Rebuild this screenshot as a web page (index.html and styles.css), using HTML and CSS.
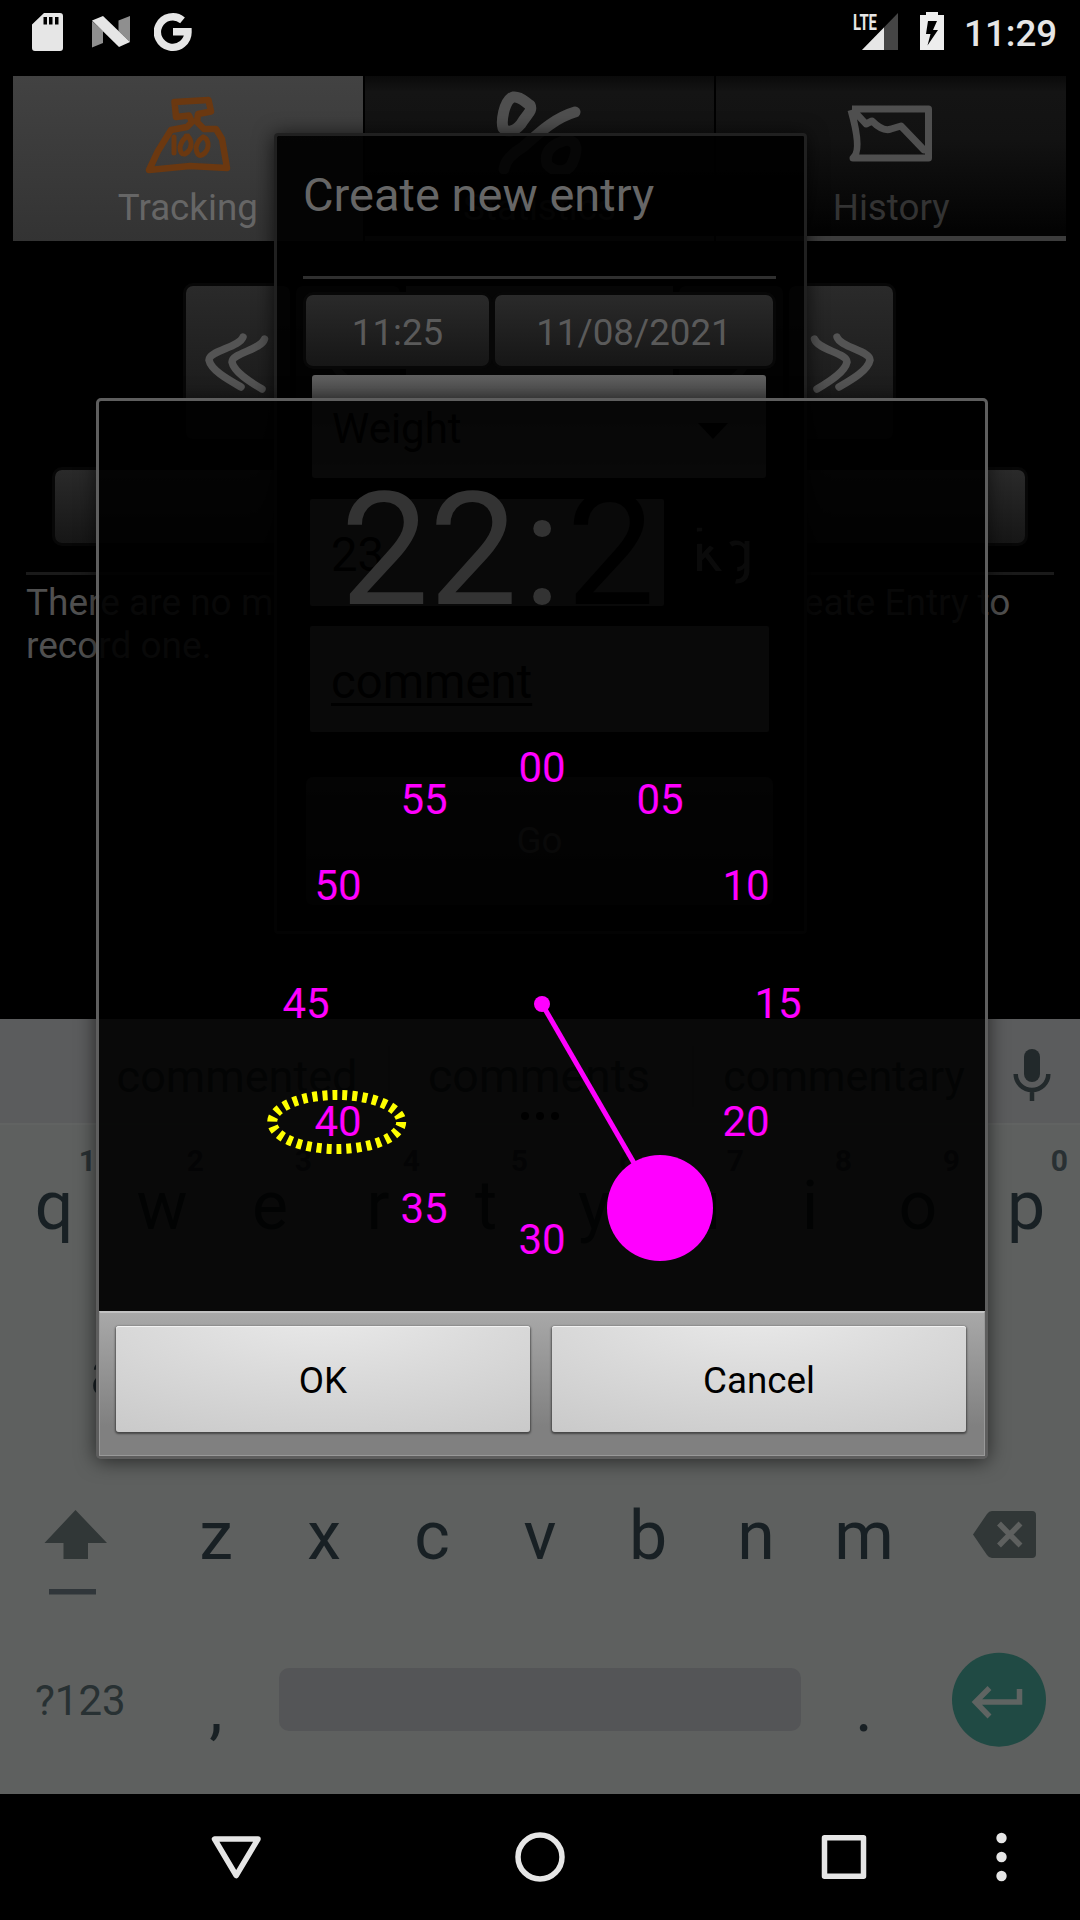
FILE: index.html
```html
<!DOCTYPE html>
<html lang="en">
<head>
<meta charset="utf-8">
<title>Create new entry</title>
<link rel="stylesheet" href="styles.css">
</head>
<body>
<div class="screen">
  <header class="status">
    <div class="status-left">
      <svg class="ic-sd" width="32" height="40" viewBox="0 0 32 40"><path fill="#e6e6e6" fill-rule="evenodd" d="M12 1H28q3 0 3 3V36q0 3-3 3H3q-3 0-3-3V12.500zM11.500 5v7.500h3.500V5zM17 5v7.500h3.500V5zM23 5v7.500h3.500V5z"/></svg>
      <svg class="ic-n" width="40" height="34" viewBox="0 0 40 34"><path fill="#8f8f8f" d="M1 6 12 16V28L1 32.500zM27.500 5.500 39 1V27L27.500 16z"/><path fill="#e6e6e6" d="M1 5.500 12 1 39 27 28 32z"/></svg>
      <svg class="ic-g" width="38" height="40" viewBox="0 0 38 40"><path fill="none" stroke="#e6e6e6" stroke-width="7.400" d="M28.500 8.300A15.300 15.300 0 1 0 34 19.700H19"/></svg>
    </div>
    <div class="status-right">
      <svg class="ic-lte" width="48" height="40" viewBox="0 0 48 40"><path fill="#454545" d="M46 1V38H10z"/><path fill="#e6e6e6" d="M32 15.500V38H10z"/><path fill="#000" d="M0 0H26V20H0z"/><text x="1" y="17.500" textLength="24" lengthAdjust="spacingAndGlyphs" class="lte">LTE</text></svg>
      <svg class="ic-bat" width="24" height="38" viewBox="0 0 24 38"><path fill="#ededed" fill-rule="evenodd" d="M6 0H18V3H24V38H0V3H6zM8 9 6 22H10.500L7.500 33.500 18 18H13L17 9z"/></svg>
      <span class="clock">11:29</span>
    </div>
  </header>

  <main class="app">
    <nav class="tabs">
      <div class="tab active">
        <svg class="tab-icon" width="88" height="88" viewBox="144 86 88 88" fill="none" stroke="#6b3810" stroke-width="6.500" stroke-linejoin="round" stroke-linecap="round">
          <path d="M174.500 102 208.500 100 211 111.500 198 114 197 122 204 129 216 129 222 139 227 168 190 166 149 170 158 151 171 130 187 127 192 122 189 115.500 176 117z"/>
          <path stroke-width="5" d="M174 137V153M188 136q-6 3-8 11 0 8 5 7 7-4 6-12-1-5-5-6M203 137q-6 4-7 11 1 9 6 7 7-4 6-12-1-5-5-6"/>
        </svg>
        <span class="tab-label">Tracking</span>
      </div>
      <div class="tab">
        <svg class="tab-icon" width="88" height="88" viewBox="495 86 88 88" fill="none" stroke="#4f4f4f" stroke-width="11" stroke-linecap="round" stroke-linejoin="round">
          <path d="M510 98C503 103 500 121 502 128 507 134 514 131 520 124 526 114 532 111 529 105 524 103 521 96 512 97M574 112C550 119 532 139 522 147 512 153 504 161 503 169M566 140C550 144 543 152 546 164 552 172 565 174 571 164 577 150 577 142 566 140"/>
        </svg>
        <span class="tab-label">Statistics</span>
      </div>
      <div class="tab">
        <svg class="tab-icon" width="88" height="88" viewBox="848 86 88 88" fill="none" stroke="#4f4f4f" stroke-width="7" stroke-linejoin="round">
          <path d="M853 109H929.500V158H854C862 152 857 128 852 110M855 111 867 124 873 121Q884 132 892 129L902 126 925 150H929"/>
        </svg>
        <span class="tab-label">History</span>
      </div>
    </nav>
    <div class="pager">
      <div class="btn"><svg width="104" height="153" viewBox="186 286 104 153" class="chev"><path d="M243 337C240 347 209 351 209 360 211 370 227 379 241 387M264.500 339C261 350 232 353 232 362 234 372 250 382 262 389"/></svg></div>
      <div class="btn"><svg width="104" height="153" viewBox="296 286 104 153" class="chev"><path d="M365 339C361 350 333 353 333 362 335 372 350 382 362 389"/></svg></div>
      <div class="period"></div>
      <div class="btn"><svg width="104" height="153" viewBox="680 286 104 153" class="chev"><path d="M715 339C719 350 747 353 747 362 745 372 730 382 718 389"/></svg></div>
      <div class="btn"><svg width="104" height="153" viewBox="790 286 104 153" class="chev"><path d="M838 337C841 347 871 351 871 360 869 370 854 379 840 387M815.500 339C819 350 848 353 848 362 846 372 830 382 818 389"/></svg></div>
    </div>
    <div class="btn wide"></div>
    <hr class="rule">
    <p class="empty">There are no measurements yet. Use Menu &gt; Create Entry to<br>record one.</p>
  </main>

  <section class="keyboard">
    <div class="suggest">
      <span>commented</span><span class="mid">comments<i class="more"></i></span><span class="last">commentary</span>
      <svg class="mic" width="38" height="52" viewBox="0 0 38 52"><rect x="11" y="0" width="16" height="33" rx="8" fill="#22292b"/><path fill="none" stroke="#22292b" stroke-width="4.500" d="M2.700 25a16.300 16 0 0 0 32.600 0M19 41V52"/></svg>
    </div>
    <div class="keys first">
      <b>q<sup>1</sup></b><b>w<sup>2</sup></b><b>e<sup>3</sup></b><b>r<sup>4</sup></b><b>t<sup>5</sup></b><b>y<sup>6</sup></b><b>u<sup>7</sup></b><b>i<sup>8</sup></b><b>o<sup>9</sup></b><b>p<sup>0</sup></b>
    </div>
    <div class="keys second"><b>a</b><b>s</b><b>d</b><b>f</b><b>g</b><b>h</b><b>j</b><b>k</b><b>l</b></div>
    <div class="keys third">
      <svg width="162" height="162" viewBox="0 1454 162 162"><path fill="#313737" d="M75.500 1510 107 1543H88V1559H63.500V1543H44.500z"/><path fill="#30363a" d="M49 1589H96V1594.500H49z"/></svg>
      <b>z</b><b>x</b><b>c</b><b>v</b><b>b</b><b>n</b><b>m</b>
      <svg width="162" height="162" viewBox="918 1454 162 162"><path fill="#313737" d="M992 1511H1032q4 0 4 4V1554q0 4-4 4H992q-3 0-5-3L973 1534.500 987 1514q2-3 5-3z"/><path fill="none" stroke="#5e605f" stroke-width="5.500" d="M999 1523.500 1020.500 1545.500M1020.500 1523.500 999 1545.500"/></svg>
    </div>
    <div class="keys fourth">
      <span class="sym">?123</span><b>,</b><span class="space"></span><b>.</b>
      <svg class="enter" width="96" height="96" viewBox="951 1652 96 96"><circle cx="999" cy="1699.700" r="47" fill="#204a44"/><path fill="none" stroke="#5f6462" stroke-width="5.500" d="M1019.500 1689V1702H976M989.500 1688 975.500 1702 989.500 1716.500"/></svg>
    </div>
  </section>

  <footer class="navbar">
    <svg width="1080" height="126" viewBox="0 1794 1080 126" fill="none" stroke="#e6e6e6" stroke-linejoin="round">
      <path stroke-width="5.500" d="M214.500 1839H258L236.200 1875.500z"/>
      <circle cx="540" cy="1857" r="22" stroke-width="5.500"/>
      <rect x="824.500" y="1837.800" width="39" height="38.500" stroke-width="5.500"/>
      <g fill="#e6e6e6" stroke="none"><circle cx="1001.500" cy="1838" r="5.200"/><circle cx="1001.500" cy="1857" r="5.200"/><circle cx="1001.500" cy="1876" r="5.200"/></g>
    </svg>
  </footer>

  <section class="entry-dialog">
    <h2>Create new entry</h2>
    <hr>
    <div class="when"><div class="btn time">11:25</div><div class="btn date">11/08/2021</div></div>
    <div class="spinner"><span>Weight</span><i class="caret"></i></div>
    <div class="value-row"><div class="field">23</div><span class="unit">kg</span></div>
    <div class="field comment"><u>comment</u></div>
    <div class="btn go">Go</div>
  </section>

  <section class="picker">
    <div class="picker-body">
      <div class="picked">22<span class="colon">:</span><span class="min">25</span></div>
      <svg class="dial" width="886" height="681" viewBox="99 630 886 681">
        <path fill="none" stroke="#f0f" stroke-width="5" d="M542 1004 660 1208"/>
        <circle cx="542" cy="1004" r="8" fill="#f0f"/>
        <circle cx="660" cy="1208" r="53" fill="#f0f"/>
        <g class="minutes">
          <text x="542" y="782">00</text><text x="660" y="814">05</text><text x="746" y="900">10</text>
          <text x="778" y="1018">15</text><text x="746" y="1136">20</text><text x="542" y="1254">30</text>
          <text x="424" y="1223">35</text><text x="338" y="1136">40</text><text x="306" y="1018">45</text>
          <text x="338" y="900">50</text><text x="424" y="814">55</text>
        </g>
        <ellipse cx="336.700" cy="1122" rx="64.500" ry="27" fill="none" stroke="#ff0" stroke-width="10" stroke-dasharray="5 5"/>
      </svg>
    </div>
    <div class="picker-actions"><div class="action">OK</div><div class="action">Cancel</div></div>
  </section>
</div>
</body>
</html>
```
FILE: styles.css
```css
* { box-sizing: border-box; }
body { margin: 0; background: #000; font-family: Roboto, sans-serif; font-size: 36.75px; }
svg { display: block; flex: none; }
hr { border: 0; margin: 0; }
.screen { position: relative; width: 1080px; height: 1920px; display: flex; flex-direction: column; overflow: hidden; background: #000; }

/* status bar */
.status { height: 76px; display: flex; justify-content: space-between; padding: 12px 23px 0 32px; color: #e6e6e6; }
.status-left, .status-right { display: flex; align-items: flex-start; }
.ic-n { margin: 3px 0 0 27px; }
.ic-g { margin-left: 23px; }
.ic-lte { margin-right: 20px; overflow: visible; }
.lte { font-size: 22px; font-weight: 700; fill: #e6e6e6; }
.clock { margin-left: 20px; width: 93px; font-weight: 500; line-height: 43px; }

/* app behind the dialogs */
.app { height: 943px; display: flex; flex-direction: column; }
.tabs { height: 165px; display: flex; gap: 2px; padding: 0 14px 0 13px; }
.tab { flex: 1; display: flex; flex-direction: column; align-items: center; padding-top: 10px; color: #333; background: linear-gradient(#0a0a0a, #141414 10%, #121212 40%, #030303 96%); border-bottom: 5px solid #3c3c3c; }
.tab.active { color: #666; background: linear-gradient(#424242, #333); border-bottom: 0; }
.tab-label { margin-top: 12px; line-height: 44px; }
.btn { background: linear-gradient(#2a2a2a, #161616); border-radius: 7px; color: #5a5a5a; box-shadow: 0 0 0 3px #070707; text-align: center; }
.pager { display: flex; gap: 6px; margin-top: 45px; padding-left: 186px; height: 153px; }
.period { width: 267px; height: 150px; background: #4a4a4a; }
.chev { fill: none; stroke: #545454; stroke-width: 7.500px; stroke-linecap: round; stroke-linejoin: round; }
.wide { margin: 31px 55px 0; height: 73px; }
.rule { margin: 29px 26px 0; height: 3px; background: #1a1a1a; }
.empty { margin: 6px 0 0 26px; font-size: 37px; line-height: 43px; color: #505050; white-space: nowrap; }

/* on-screen keyboard */
.keyboard { height: 775px; background: #5e605f; color: #182024; display: flex; flex-direction: column; }
.suggest { height: 106px; display: flex; align-items: center; padding: 10px 0 0 84px; background: #5b5c5d; border-bottom: 2px solid #616362; font-size: 45px; color: #23292b; }
.suggest span { position: relative; width: 304px; text-align: center; line-height: 61px; border-left: 2px solid #535556; }
.suggest span:first-child { border-color: transparent; }
.suggest .mid { width: 304px; padding-right: 4px; font-size: 46.500px; }
.suggest .last { font-size: 43px; padding-right: 2px; }
.more { position: absolute; left: 131px; top: 66px; width: 8px; height: 8px; border-radius: 50%; background: #000; box-shadow: 15px 0 #000, 30px 0 #000; }
.mic { margin: -3px 0 0 17px; }
.keys { display: flex; }
.keys b { position: relative; width: 108px; font-size: 68px; font-weight: 400; text-align: center; line-height: 162px; }
.keys sup { position: absolute; right: 12px; top: 18px; font-size: 30px; font-weight: 700; line-height: 36px; color: #293033; }
.first { height: 167px; }
.second { height: 162px; padding-left: 54px; }
.third { height: 162px; }
.third b { line-height: 164px; }
.fourth { height: 178px; align-items: flex-start; }
.fourth b { line-height: 184px; }
.sym { width: 162px; padding-left: 35px; font-size: 42px; line-height: 170px; color: #283133; }
.space { width: 522px; height: 63px; margin: 52px 9px 0; border-radius: 10px; background: #545557; }
.enter { margin: 36px 0 0 33px; }
.navbar { height: 126px; }

/* entry dialog */
.entry-dialog { position: absolute; left: 274px; top: 133px; width: 533px; height: 801px; padding: 0 28px 0 26px; border: 3px solid #202020; border-radius: 4px; background: rgba(0, 0, 0, .92); background-clip: padding-box; box-shadow: 0 2px 20px rgba(0, 0, 0, .7); }
.entry-dialog h2 { margin: 0; font-size: 47px; font-weight: 400; line-height: 118px; color: #666; }
.entry-dialog hr { margin-top: 22px; height: 3px; background: #2f2f2f; }
.when { display: flex; gap: 6px; margin: 16px 0 0 3px; }
.when .btn { height: 71px; line-height: 76px; }
.time { width: 183px; }
.date { width: 278px; }
.spinner { display: flex; justify-content: space-between; width: 454px; height: 103px; margin: 9px 0 0 9px; padding: 0 38px 0 20px; align-items: center; background: linear-gradient(#606060, #484848 24%, #5c5c5c); border-radius: 3px; font-size: 42px; color: #000; line-height: 107px; }
.spinner span { padding-top: 3px; }
.caret { border: 15.500px solid transparent; border-top: 16px solid #000; border-bottom: 0; margin-top: 8px; }
.value-row { display: flex; height: 107px; margin: 21px 0 0 7px; }
.field { width: 354px; height: 107px; padding-left: 21px; background: #5c5c5c; border-radius: 2px; font-size: 47.250px; line-height: 112px; color: #000; }
.unit { margin-left: 29px; font-size: 57px; line-height: 105px; color: #6a6a6a; }
.comment { width: 459px; height: 106px; margin: 20px 0 0 7px; }
.comment u { text-underline-offset: 5px; text-decoration-thickness: 2.500px; }
.go { width: 467px; height: 128px; margin: 45px 0 0 3px; line-height: 128px; }

/* time picker */
.picker { position: absolute; left: 96px; top: 398px; width: 892px; height: 1061px; display: flex; flex-direction: column; border: 3px solid #5e5e5e; border-radius: 5px; background: rgba(0, 0, 0, .9); background-clip: padding-box; box-shadow: 0 2px 20px rgba(0, 0, 0, .6); }
.picker-body { height: 910px; padding-top: 69px; }
.picked { font-size: 157.500px; line-height: 160px; text-align: center; color: #333; }
.colon { margin: 0 5.500px; }
.min { color: #000; }
.minutes { font-size: 42px; fill: #f0f; text-anchor: middle; }
.picker-actions { flex: 1; display: flex; gap: 22px; padding: 13px 18px 0 16px; border: 1px solid #999; border-top: 2px solid #c2c2c2; background: linear-gradient(#a8a8a8, #808080 80%); }
.action { flex: 1; height: 106px; border-radius: 3px; background: radial-gradient(ellipse 90% 140% at 50% -20%, #ebebeb, #dadada 50%, #cacaca); box-shadow: 0 1px 2px 1px rgba(0, 0, 0, .45), inset 0 1px #f2f2f2; text-align: center; line-height: 109px; color: #000; }
```
